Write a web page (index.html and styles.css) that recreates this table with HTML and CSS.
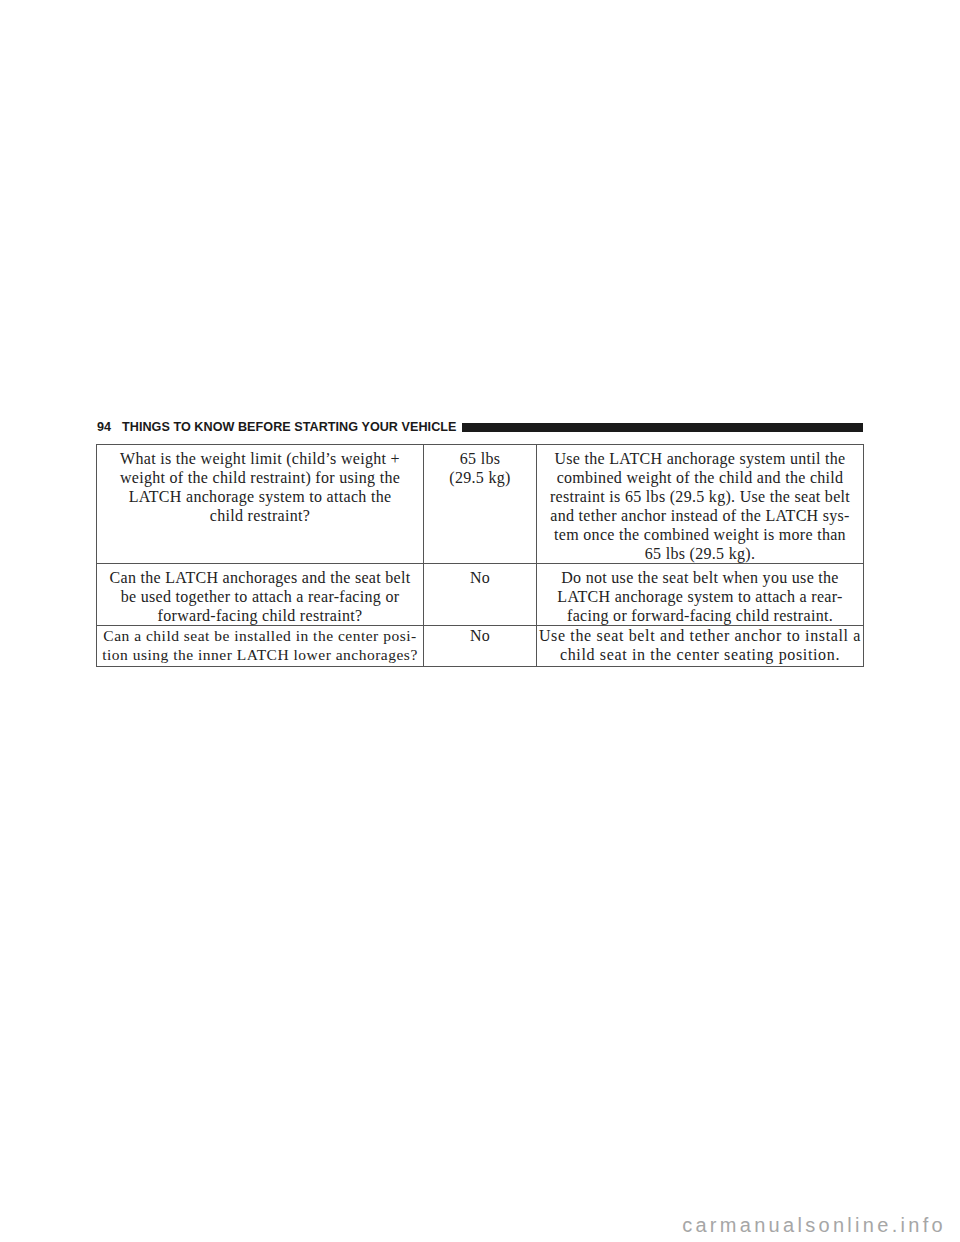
FILE: index.html
```html
<!DOCTYPE html>
<html>
<head>
<meta charset="utf-8">
<link rel="stylesheet" href="styles.css">
</head>
<body>
<div class="page">
  <div class="header">
    <span class="pnum">94</span>
    <span class="title">THINGS TO KNOW BEFORE STARTING YOUR VEHICLE</span>
    <span class="bar"></span>
  </div>
  <table class="faq">
    <colgroup>
      <col class="c1"><col class="c2"><col class="c3">
    </colgroup>
    <tr class="r1">
      <td>What is the weight limit (child’s weight +<br>weight of the child restraint) for using the<br>LATCH anchorage system to attach the<br>child restraint?</td>
      <td>65 lbs<br>(29.5 kg)</td>
      <td>Use the LATCH anchorage system until the<br>combined weight of the child and the child<br>restraint is 65 lbs (29.5 kg). Use the seat belt<br>and tether anchor instead of the LATCH sys-<br>tem once the combined weight is more than<br>65 lbs (29.5 kg).</td>
    </tr>
    <tr class="r2">
      <td>Can the LATCH anchorages and the seat belt<br>be used together to attach a rear-facing or<br>forward-facing child restraint?</td>
      <td>No</td>
      <td>Do not use the seat belt when you use the<br>LATCH anchorage system to attach a rear-<br>facing or forward-facing child restraint.</td>
    </tr>
    <tr class="r3">
      <td class="small">Can a child seat be installed in the center posi-<br>tion using the inner LATCH lower anchorages?</td>
      <td>No</td>
      <td class="tight">Use the seat belt and tether anchor to install a<br>child seat in the center seating position.</td>
    </tr>
  </table>
</div>
<div class="watermark">carmanualsonline.info</div>
</body>
</html>
```

FILE: styles.css
```css
html, body {
  margin: 0;
  padding: 0;
  background: #fff;
}
body {
  width: 960px;
  height: 1242px;
  display: flex;
  flex-direction: column;
  overflow: hidden;
}
.page {
  padding: 420px 0 0 96px;
  width: 767px;
}
.header {
  display: flex;
  align-items: center;
  height: 14px;
  font-family: "Liberation Sans", Arial, sans-serif;
  font-weight: bold;
  font-size: 12.6px;
  line-height: 14px;
  color: #1a1a1a;
}
.pnum {
  padding-left: 1px;
  width: 25px;
}
.title {
  letter-spacing: 0.05px;
}
.bar {
  flex: 1;
  height: 9px;
  margin-left: 5px;
  background: #1a1a1a;
}
.faq {
  margin-top: 10px;
  width: 767px;
  table-layout: fixed;
  border-collapse: collapse;
  font-family: "Liberation Serif", "Times New Roman", serif;
  font-size: 16px;
  line-height: 19px;
  letter-spacing: 0.3px;
  color: #222;
}
.c1 { width: 327px; }
.c2 { width: 113px; }
.c3 { width: 327px; }
.faq td {
  border: 1px solid #555;
  text-align: center;
  vertical-align: top;
  padding: 4px 1px 0 1px;
  white-space: nowrap;
}
.faq .r3 td {
  padding-top: 0;
  padding-bottom: 2px;
}
.faq td.small {
  font-size: 15.5px;
  letter-spacing: 0.5px;
}
.faq td.tight {
  letter-spacing: 0.65px;
}
.watermark {
  margin-top: auto;
  margin-bottom: 6px;
  align-self: flex-end;
  margin-right: 14px;
  font-family: "Liberation Sans", Arial, sans-serif;
  font-size: 20px;
  line-height: 22px;
  letter-spacing: 3.3px;
  color: #a6a6a6;
}
```
